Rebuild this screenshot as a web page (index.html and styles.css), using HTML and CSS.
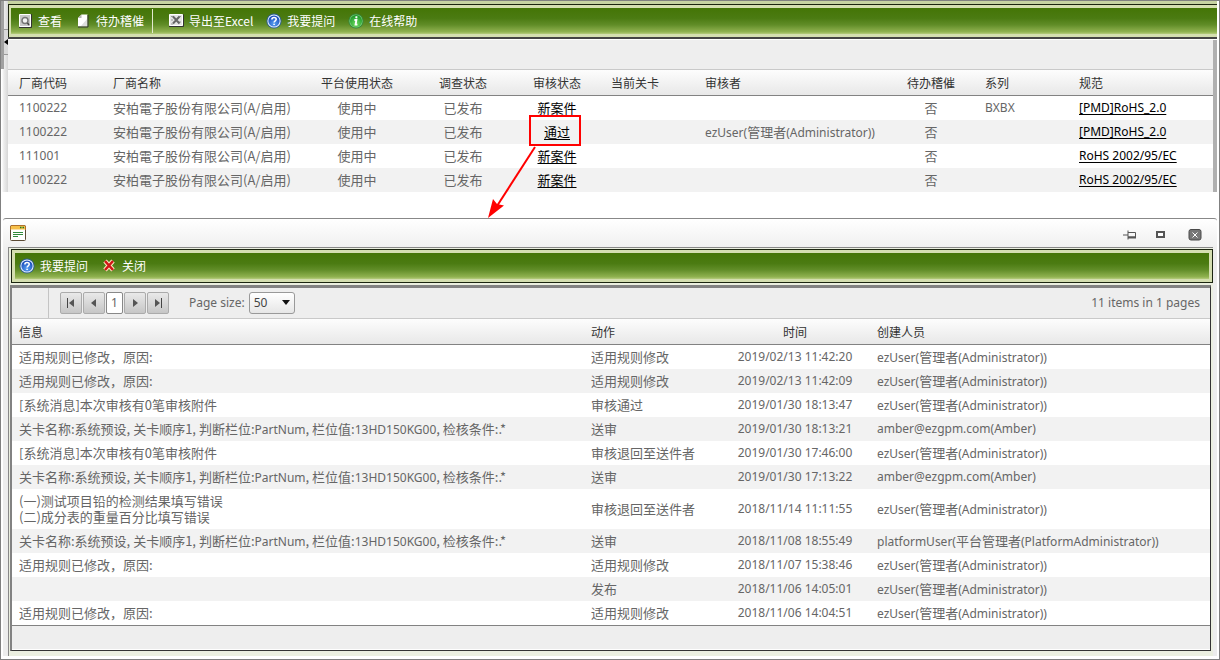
FILE: index.html
```
<!DOCTYPE html>
<html lang="zh-CN">
<head>
<meta charset="utf-8">
<title>审核状态</title>
<link rel="stylesheet" href="styles.css">
</head>
<body>
<svg class="defs" width="0" height="0" aria-hidden="true">
  <defs>
    <radialGradient id="blue" cx="50%" cy="75%" r="70%"><stop offset="0" stop-color="#5aa2f4"/><stop offset="1" stop-color="#1648b8"/></radialGradient>
    <radialGradient id="green" cx="50%" cy="75%" r="70%"><stop offset="0" stop-color="#6fdc62"/><stop offset="1" stop-color="#1c9628"/></radialGradient>
    <symbol id="i-help" viewBox="0 0 16 16">
      <circle cx="8" cy="8" r="7.6" fill="#2c5f8c"/><circle cx="8" cy="8" r="6.6" fill="#e4efff"/><circle cx="8" cy="8" r="5.6" fill="url(#blue)"/>
      <path d="M5.9 6.4C5.9 3.9 10.2 3.9 10.2 6.3C10.2 7.8 8.1 7.8 8.1 9.6M8.1 10.7V12.1" fill="none" stroke="#fff" stroke-width="1.6"/>
    </symbol>
    <symbol id="i-info" viewBox="0 0 16 16">
      <circle cx="8" cy="8" r="7.6" fill="#35893b"/><circle cx="8" cy="8" r="6.6" fill="#7fce7b"/><circle cx="8" cy="8" r="6" fill="url(#green)"/>
      <path d="M8.6 3.2L8.2 5.2M6.4 7H8.4L7.6 11.6H9.4" fill="none" stroke="#fff" stroke-width="1.9"/>
    </symbol>
  </defs>
</svg>
<div class="page">
  <section class="upper">
    <div class="rail" aria-hidden="true"><div class="rail-tab"><svg class="rail-arrow" viewBox="0 0 4 6"><path d="M4 0V6L0 3Z"/></svg></div></div>
    <div class="upper-main">
      <nav class="toolbar">
        <div class="toolbar-inner">
          <button type="button" class="tool"><svg viewBox="0 0 16 16"><path d="M2.500 1.500H13.500V13.500H2.500Z" fill="#c9c9c9" stroke="#fff"/><path d="M2 14.500H14.500V1" fill="none" stroke="#333"/><circle cx="8" cy="7.500" r="3" fill="#f4f4f4" stroke="#777" stroke-width="1.500"/><path d="M10.500 10L12 12" stroke="#444" stroke-width="1.600"/></svg>查看</button>
          <button type="button" class="tool"><svg viewBox="0 0 16 16"><path d="M6.5 1.5H12.5V13.5H3V5Z" fill="#fff"/><path d="M6.5 1.5V5H3Z" fill="#b5b5b5"/><path d="M6 13L12 6V13Z" fill="#ddd"/><path d="M13 2V14H3" fill="none" stroke="#333"/></svg>待办稽催</button>
          <span class="tool-sep"></span>
          <button type="button" class="tool"><svg viewBox="0 0 16 16"><path d="M1.500 1.500H14.500V12.500H1.500Z" fill="#e4e4e4" stroke="#fff"/><path d="M1 13.500H15.500V1.500" fill="none" stroke="#333"/><path d="M3 3.500H6M11 3.500H13M3 7H5M11 9H13M3 11H5" stroke="#999"/><path d="M5 3.500L11.500 10.500M11.500 3.500L5 10.500" stroke="#666" stroke-width="2"/></svg>导出至Excel</button>
          <button type="button" class="tool"><svg viewBox="0 0 16 16"><use href="#i-help"/></svg>我要提问</button>
          <button type="button" class="tool"><svg viewBox="0 0 16 16"><use href="#i-info"/></svg>在线帮助</button>
        </div>
      </nav>
      <div class="upper-grid">
        <div class="grid-band"></div>
        <table class="grid">
          <colgroup><col class="w-code"><col class="w-name"><col class="w-plat"><col class="w-mid"><col class="w-mid"><col class="w-mid"><col class="w-auditor"><col class="w-mid"><col class="w-mid"><col></colgroup>
          <thead><tr><th class="first">厂商代码</th><th>厂商名称</th><th class="c">平台使用状态</th><th class="c">调查状态</th><th class="c">审核状态</th><th>当前关卡</th><th>审核者</th><th class="c">待办稽催</th><th>系列</th><th>规范</th></tr></thead>
          <tbody>
            <tr><td class="first en">1100222</td><td>安柏電子股份有限公司(A/启用)</td><td class="c">使用中</td><td class="c">已发布</td><td class="c"><a href="#">新案件</a></td><td></td><td></td><td class="c">否</td><td class="en">BXBX</td><td class="en"><a href="#">[PMD]RoHS_2.0</a></td></tr>
            <tr><td class="first en">1100222</td><td>安柏電子股份有限公司(A/启用)</td><td class="c">使用中</td><td class="c">已发布</td><td class="c marked"><a href="#log">通过</a><svg class="callout" viewBox="0 0 100 110" aria-hidden="true"><rect x="43" y="3" width="50" height="29" fill="none" stroke="#f00" stroke-width="2"/><path d="M48 34L10 93" stroke="#f00" stroke-width="2"/><path d="M1 105L6 86L10 91L17 92.500Z" fill="#f00"/></svg></td><td></td><td class="en">ezUser(<span class="cn">管理者</span>(Administrator))</td><td class="c">否</td><td></td><td class="en"><a href="#">[PMD]RoHS_2.0</a></td></tr>
            <tr><td class="first en">111001</td><td>安柏電子股份有限公司(A/启用)</td><td class="c">使用中</td><td class="c">已发布</td><td class="c"><a href="#">新案件</a></td><td></td><td></td><td class="c">否</td><td></td><td class="en"><a href="#">RoHS 2002/95/EC</a></td></tr>
            <tr><td class="first en">1100222</td><td>安柏電子股份有限公司(A/启用)</td><td class="c">使用中</td><td class="c">已发布</td><td class="c"><a href="#">新案件</a></td><td></td><td></td><td class="c">否</td><td></td><td class="en"><a href="#">RoHS 2002/95/EC</a></td></tr>
          </tbody>
        </table>
      </div>
    </div>
  </section>

  <section class="window" id="log">
    <header class="titlebar">
      <svg class="win-icon" viewBox="0 0 16 16"><rect x=".5" y=".5" width="15" height="15" rx="1" fill="#fff" stroke="#5b4a35"/><path d="M1 1H15V4.500H1Z" fill="#f6c04a"/><path d="M.5 5V1.500L1.500 .5H14.500L15.500 1.500V5" fill="none" stroke="#b0702a"/><path d="M10 2.500H11.500M12.500 2.500H14" stroke="#1d7d2c" stroke-width="1.500"/><path d="M3 7.500H13M3 9.500H13M3 11.500H8" stroke="#2f8a3c"/></svg>
      <div class="win-actions">
        <button type="button" aria-label="固定"><svg viewBox="0 0 14 12"><path d="M1 6H6M6 1.500V10.500M6 3.500H13.500V8H6" fill="none" stroke="#555"/><path d="M6 8.500H14" stroke="#555" stroke-width="2"/></svg></button>
        <button type="button" aria-label="最大化"><svg viewBox="0 0 14 12"><rect x="3" y="3" width="7" height="5" fill="#fff" stroke="#555" stroke-width="2"/></svg></button>
        <button type="button" aria-label="关闭窗口"><svg viewBox="0 0 14 12"><rect x="1" y=".5" width="12" height="10.500" rx="2" fill="#777" stroke="#4a4a4a"/><path d="M4.500 3.500L9.500 8.500M9.500 3.500L4.500 8.500" stroke="#fff"/></svg></button>
      </div>
    </header>
    <div class="win-body">
      <nav class="toolbar boxed">
        <div class="toolbar-inner">
          <button type="button" class="tool"><svg viewBox="0 0 16 16"><use href="#i-help"/></svg>我要提问</button>
          <button type="button" class="tool"><svg viewBox="0 0 16 16"><path d="M4 3L12 12M12 3L4 12" stroke="#ffe9c0" stroke-width="4.500"/><path d="M4 3L12 12M12 3L4 12" stroke="#d01818" stroke-width="2.600"/></svg>关闭</button>
        </div>
      </nav>
      <div class="log-grid">
        <div class="pager">
          <span class="pager-gap"></span>
          <div class="pager-nav">
            <button type="button" class="pg" aria-label="第一页"><svg viewBox="0 0 12 10"><path d="M2.500 0V10" stroke="#444"/><path d="M9 1V9L4 5Z"/></svg></button>
            <button type="button" class="pg" aria-label="上一页"><svg viewBox="0 0 12 10"><path d="M8 1V9L3 5Z"/></svg></button>
            <button type="button" class="pg current">1</button>
            <button type="button" class="pg" aria-label="下一页"><svg viewBox="0 0 12 10"><path d="M4 1V9L9 5Z"/></svg></button>
            <button type="button" class="pg" aria-label="最后一页"><svg viewBox="0 0 12 10"><path d="M9.500 0V10" stroke="#444"/><path d="M3 1V9L8 5Z"/></svg></button>
          </div>
          <label for="size">Page size:</label>
          <span class="select"><select id="size"><option>50</option></select><svg viewBox="0 0 8 5"><path d="M0 0H8L4 5Z"/></svg></span>
          <span class="count">11 items in 1 pages</span>
        </div>
        <table class="grid">
          <colgroup><col><col class="w-action"><col class="w-time"><col class="w-user"></colgroup>
          <thead><tr><th>信息</th><th>动作</th><th class="c">时间</th><th>创建人员</th></tr></thead>
          <tbody>
            <tr><td>适用规则已修改，原因:</td><td>适用规则修改</td><td class="c en">2019/02/13 11:42:20</td><td class="en">ezUser(<span class="cn">管理者</span>(Administrator))</td></tr>
            <tr><td>适用规则已修改，原因:</td><td>适用规则修改</td><td class="c en">2019/02/13 11:42:09</td><td class="en">ezUser(<span class="cn">管理者</span>(Administrator))</td></tr>
            <tr><td>[系统消息]本次审核有0笔审核附件</td><td>审核通过</td><td class="c en">2019/01/30 18:13:47</td><td class="en">ezUser(<span class="cn">管理者</span>(Administrator))</td></tr>
            <tr><td>关卡名称:系统预设, 关卡顺序1, 判断栏位:<span class="en">PartNum</span>, 栏位值:<span class="en">13HD150KG00</span>, 检核条件:.*</td><td>送审</td><td class="c en">2019/01/30 18:13:21</td><td class="en">amber@ezgpm.com(Amber)</td></tr>
            <tr><td>[系统消息]本次审核有0笔审核附件</td><td>审核退回至送件者</td><td class="c en">2019/01/30 17:46:00</td><td class="en">ezUser(<span class="cn">管理者</span>(Administrator))</td></tr>
            <tr><td>关卡名称:系统预设, 关卡顺序1, 判断栏位:<span class="en">PartNum</span>, 栏位值:<span class="en">13HD150KG00</span>, 检核条件:.*</td><td>送审</td><td class="c en">2019/01/30 17:13:22</td><td class="en">amber@ezgpm.com(Amber)</td></tr>
            <tr class="tall"><td>(一)测试项目铅的检测结果填写错误<br>(二)成分表的重量百分比填写错误</td><td>审核退回至送件者</td><td class="c en">2018/11/14 11:11:55</td><td class="en">ezUser(<span class="cn">管理者</span>(Administrator))</td></tr>
            <tr><td>关卡名称:系统预设, 关卡顺序1, 判断栏位:<span class="en">PartNum</span>, 栏位值:<span class="en">13HD150KG00</span>, 检核条件:.*</td><td>送审</td><td class="c en">2018/11/08 18:55:49</td><td class="en">platformUser(<span class="cn">平台管理者</span>(PlatformAdministrator))</td></tr>
            <tr><td>适用规则已修改，原因:</td><td>适用规则修改</td><td class="c en">2018/11/07 15:38:46</td><td class="en">ezUser(<span class="cn">管理者</span>(Administrator))</td></tr>
            <tr><td></td><td>发布</td><td class="c en">2018/11/06 14:05:01</td><td class="en">ezUser(<span class="cn">管理者</span>(Administrator))</td></tr>
            <tr><td>适用规则已修改，原因:</td><td>适用规则修改</td><td class="c en">2018/11/06 14:04:51</td><td class="en">ezUser(<span class="cn">管理者</span>(Administrator))</td></tr>
          </tbody>
        </table>
        <div class="grid-foot"></div>
      </div>
    </div>
  </section>
</div>
</body>
</html>
```
FILE: styles.css
```
* { box-sizing: border-box; }
body {
  margin: 0;
  font: 13px/16px "Noto Sans CJK SC", "Noto Sans", sans-serif;
  color: #666;
  background: #fff;
}
button, select { font: inherit; color: inherit; margin: 0; padding: 0; border: 0; background: none; }
svg { display: block; }
.defs { position: absolute; }
.page { border: 1px solid #808080; padding: 0 2px 3px; }

.upper { display: flex; }
.rail {
  flex: none;
  width: 7px;
  margin-left: -2px;
  padding: 28px 0 0 3px;
  background:
    linear-gradient(#a0a0a0, #a0a0a0) 0 0 / 3px 68px no-repeat,
    linear-gradient(90deg, #fff 1px, #f2f2f2 2px, #e6e6e6 60%, #d6d6d6);
}
.rail-tab {
  display: flex;
  align-items: center;
  height: 26px;
  border: 1px solid #999;
  border-width: 1px 0;
  background: #d9d9d9;
}
.rail-arrow { width: 4px; height: 6px; fill: #000; }
.upper-main { flex: 1; min-width: 0; }

.toolbar { background: #d4deb0; }
.upper .toolbar {
  padding: 3px 0 0;
  box-shadow: inset 0 3px #c7d3a2, inset 0 4px #1c2410, inset 1px 0 #1c2410;
  border-bottom: 2px solid #444;
  margin-bottom: 1px;
}
.upper .toolbar-inner { margin: 4px 0 3px 3px; }
.toolbar-inner {
  display: flex;
  align-items: center;
  height: 26px;
  padding-left: 6px;
  background: linear-gradient(#447506, #4b7b12 40%, #618d28 65%, #90b250 92%, #b5cc7d);
}
.boxed { border: 1px solid #1b2510; padding: 3px; margin: 1px 0 2px 1px; }
.boxed .toolbar-inner { padding-left: 4px; }
.tool {
  display: flex;
  align-items: center;
  gap: 5px;
  margin-right: 13px;
  color: #fff;
  font-size: 12px;
  white-space: nowrap;
}
.tool svg { width: 16px; height: 16px; }
.tool-sep { width: 1px; height: 24px; margin: 0 15px 0 -5px; background: #e3ead0; }

.upper-grid { border-right: 4px solid #b0b0b0; }
.grid-band { height: 30px; background: #eee; border-bottom: 1px solid #c9c9c9; }

.grid { width: 100%; table-layout: fixed; border-collapse: separate; border-spacing: 0; }
.grid th {
  height: 26px;
  padding: 4px 7px;
  font-size: 12px;
  font-weight: 400;
  text-align: left;
  color: #333;
  white-space: nowrap;
  border-bottom: 1px solid #828282;
  background: linear-gradient(#fdfdfd, #e8e8e8);
}
.grid td { height: 24px; padding: 0 7px; white-space: nowrap; }
.grid .tall td { height: 40px; }
.grid tbody tr:nth-child(even) { background: #f2f2f2; }
.grid .c { text-align: center; padding-left: 0; padding-right: 0; }
.grid .first { padding-left: 11px; }
.grid a { color: #000; text-decoration: underline; text-underline-offset: 2px; }
.w-code { width: 98px; }
.w-name { width: 192px; }
.w-plat { width: 118px; }
.w-mid { width: 94px; }
.w-auditor { width: 186px; }
.w-action { width: 136px; }
.w-time { width: 150px; }
.w-user { width: 340px; }
.marked { position: relative; }
.callout { position: absolute; left: -23px; top: -7px; width: 100px; height: 110px; pointer-events: none; }

.window {
  margin-top: 26px;
  border-top: 1px solid #888;
  border-radius: 3px 3px 0 0;
  padding: 0 4px 0 5px;
  background: linear-gradient(#fff, #ededed 34px);
}
.titlebar { display: flex; align-items: center; justify-content: space-between; height: 28px; padding: 0 11px 0 2px; }
.win-icon { width: 16px; height: 16px; }
.win-actions { display: flex; gap: 18px; padding-top: 4px; }
.win-actions button:last-child { margin-left: 2px; }
.win-actions svg { width: 14px; height: 12px; }
.win-body { border: 1px solid #888; border-width: 1px 0 0 1px; padding: 0 0 5px 1px; background: #ebefe0; }
.log-grid { border: 1px solid #333; border-top: 3px solid #828282; border-left: 2px solid #828282; margin-right: 2px; background: #fff; }

.pager { display: flex; align-items: center; height: 31px; padding-right: 10px; background: #eee; border-bottom: 1px solid #c9c9c9; }
.pager-gap { width: 37px; height: 30px; border-right: 1px solid #c4c4c4; margin-right: 11px; }
.pager-nav { display: flex; gap: 1px; margin-right: 20px; }
.pg {
  display: flex;
  align-items: center;
  justify-content: center;
  width: 22px;
  height: 22px;
  border: 1px solid #ababab;
  border-radius: 2px;
  background: linear-gradient(#e9e9e9, #c6c6c6);
}
.pg.current { width: 17px; background: #fff; border-color: #888; }
.pg svg { width: 12px; height: 10px; fill: #555; }
.pager, .en { font-family: "Noto Sans", "Noto Sans CJK SC", sans-serif; font-size: 12px; }
.cn { font-family: "Noto Sans CJK SC", sans-serif; font-size: 13px; }
.select { position: relative; display: flex; margin-left: 4px; }
.select select {
  appearance: none;
  width: 46px;
  height: 22px;
  padding-left: 4px;
  color: #444;
  border: 1px solid #999;
  border-radius: 3px;
  background: linear-gradient(#fff, #e6e6e6);
}
.select svg { position: absolute; right: 5px; top: 8px; width: 8px; height: 5px; fill: #111; pointer-events: none; }
.count { margin-left: auto; }
.grid-foot { height: 25px; background: #eee; border-top: 1px solid #828282; border-bottom: 1px solid #fff; }
```
